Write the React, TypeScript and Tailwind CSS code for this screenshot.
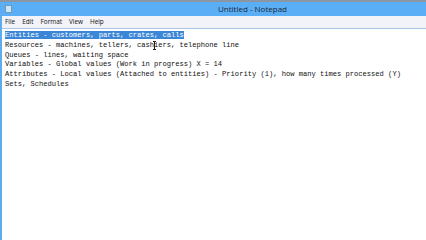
const lines = [
  'Resources - machines, tellers, cashiers, telephone line',
  'Queues - lines, waiting space',
  'Variables - Global values (Work in progress) X = 14',
  'Attributes - Local values (Attached to entities) - Priority (1), how many times processed (Y)',
  'Sets, Schedules',
];

const menu = ['File', 'Edit', 'Format', 'View', 'Help'];

export default function App() {
  return (
    <div className="w-[426px] h-[240px] overflow-hidden bg-white flex flex-col relative">
      <div className="h-[2px] bg-[#8a96a3]" />
      <div className="flex flex-1 min-h-0">
        <div className="w-[2px] bg-[#5dacf0]" />
        <div className="flex-1 flex flex-col min-w-0">
          {/* title bar */}
          <div className="h-[14px] bg-[#5aaef5] flex items-center relative">
            <div className="ml-[3px] w-[7px] h-[8px] bg-[#cfe4f2] border border-[#6c9bbd]" />
            <span className="absolute left-[216px] top-[1px] text-[8px] leading-[12px] text-[#1c2a38] font-['Open_Sans',sans-serif]">
              Untitled - Notepad
            </span>
          </div>
          {/* menu bar */}
          <div className="h-[12px] bg-[#f2f3f8] flex items-center gap-[7px] pl-[3px] text-[6.4px] leading-[12px] text-[#111] font-['Open_Sans',sans-serif]">
            {menu.map((m) => (
              <span key={m}>{m}</span>
            ))}
          </div>
          <div className="h-[1px] bg-[#a9c6e6]" />
          {/* edit area */}
          <div className="flex-1 pt-[2px] pl-[3px] font-['Liberation_Mono',monospace] text-[7.1px] leading-[9.8px] text-[#111] whitespace-pre">
            <div>
              <span className="bg-[#3b86d6] text-white">Entities - customers, parts, crates, calls</span>
            </div>
            {lines.map((l) => (
              <div key={l}>{l}</div>
            ))}
          </div>
        </div>
      </div>
      {/* mouse I-beam cursor */}
      <div className="absolute left-[153px] top-[41px] w-[3px] h-[9px] border-y border-[#222]">
        <div className="mx-auto w-[1px] h-full bg-[#222]" />
      </div>
    </div>
  );
}
